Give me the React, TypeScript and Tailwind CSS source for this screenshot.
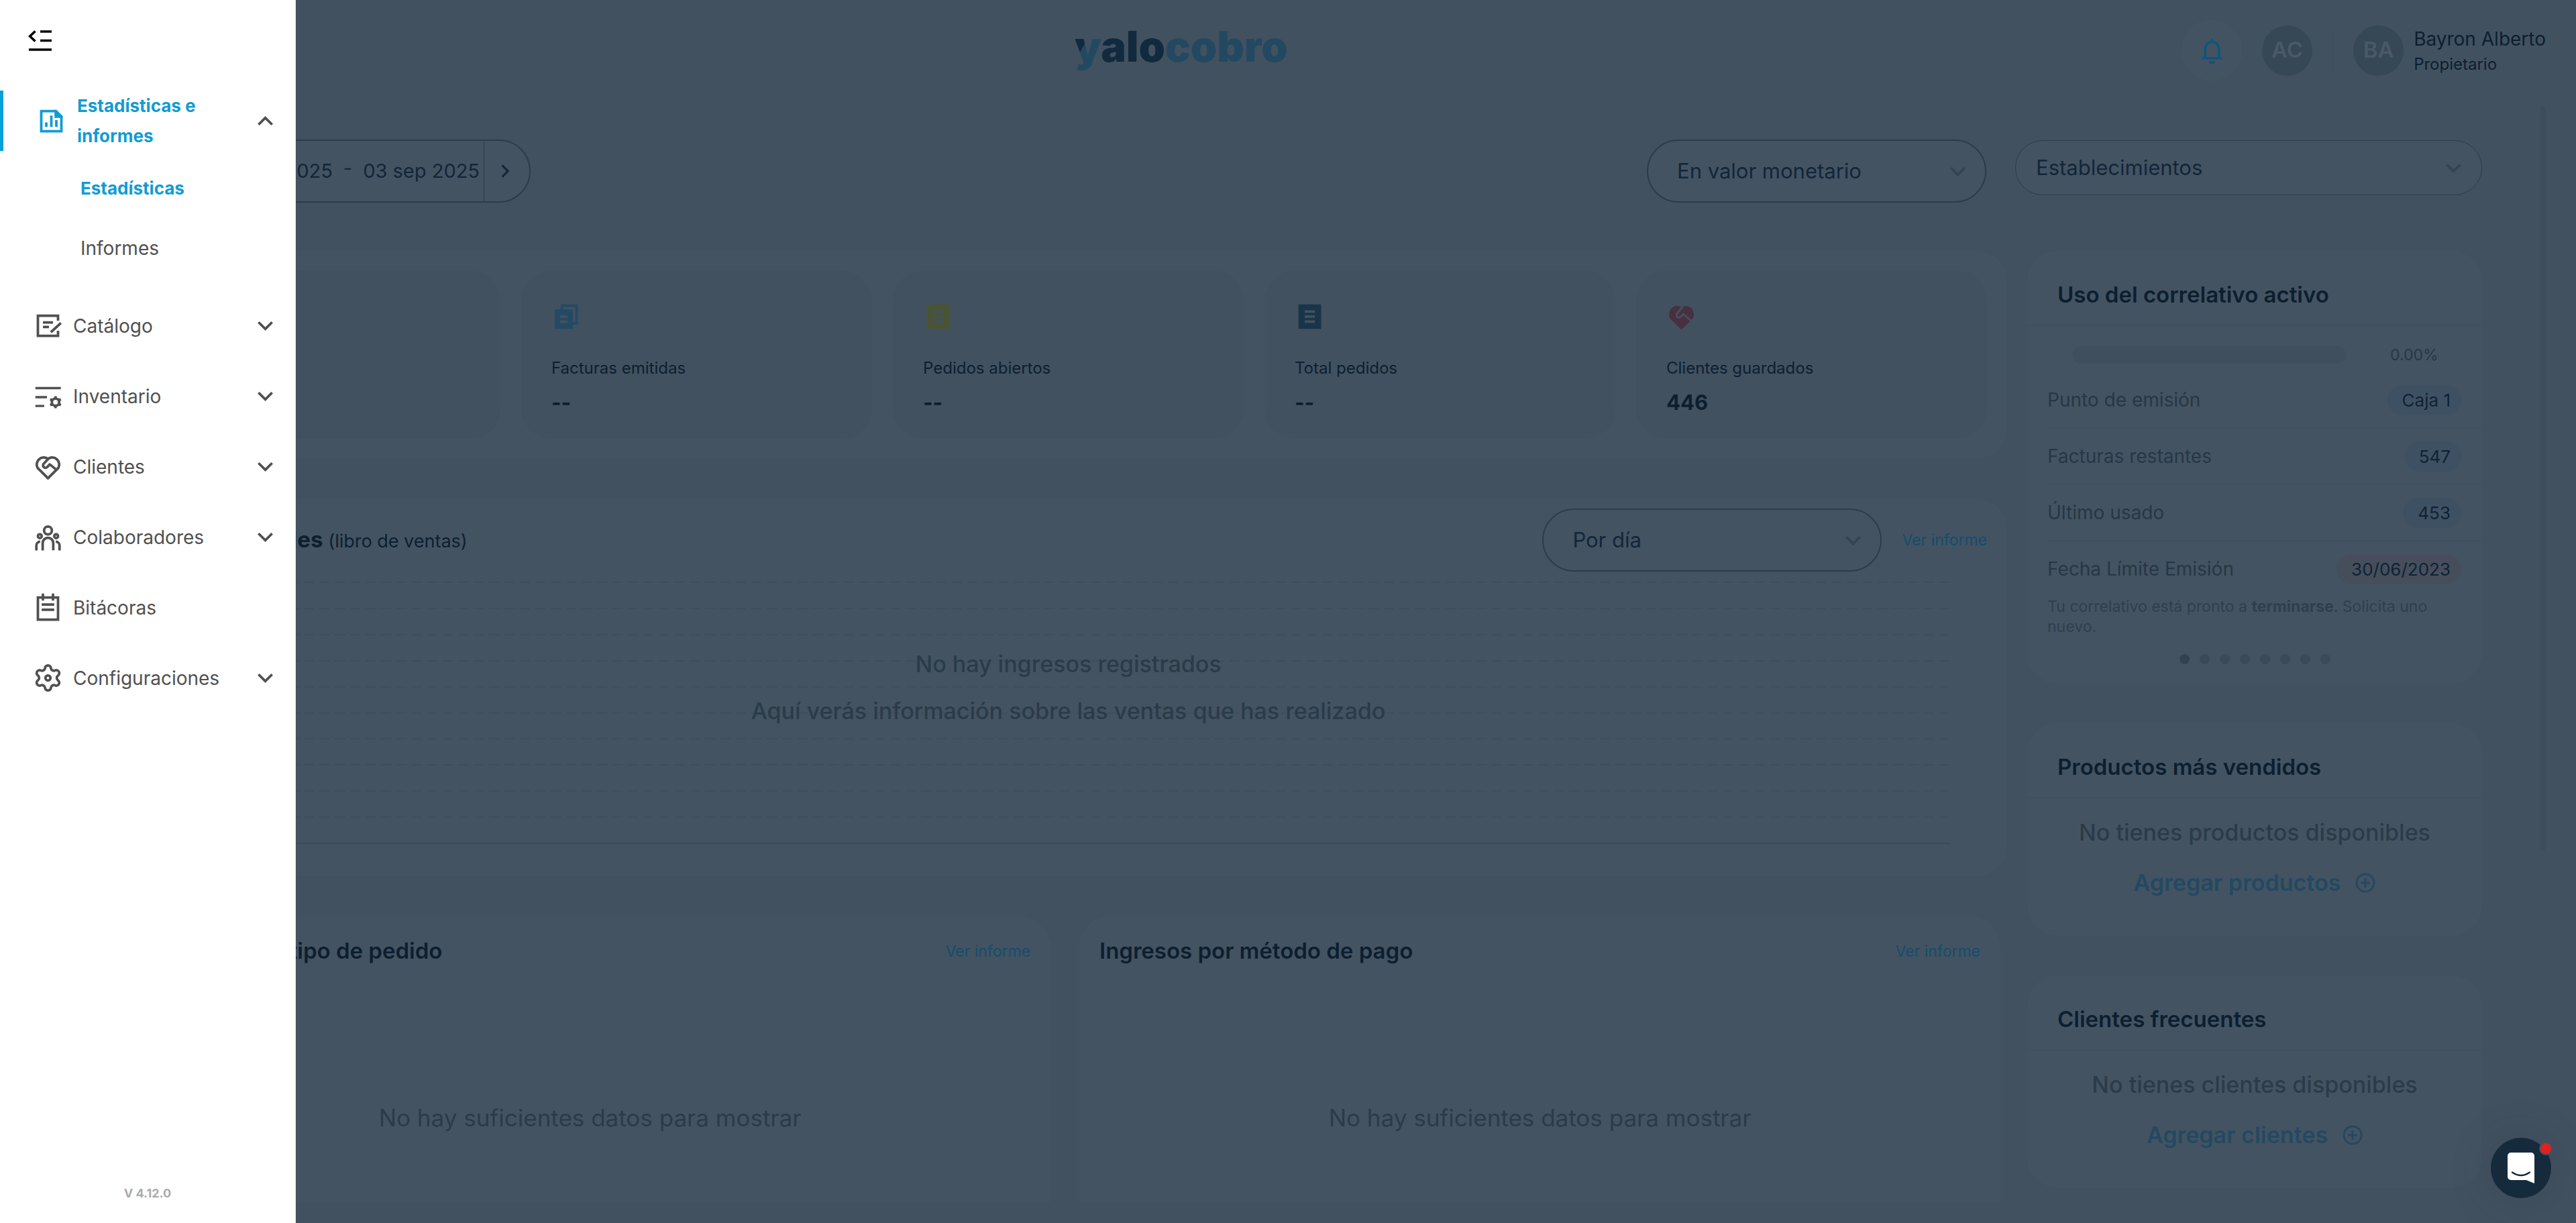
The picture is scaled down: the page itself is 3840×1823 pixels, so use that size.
import React from 'react'

type IconProps = { className?: string }

const Svg = ({ className = 'size-[45px]', children }: { className?: string, children: React.ReactNode }) => (
  <svg viewBox="0 0 24 24" className={className} fill="none" stroke="currentColor" strokeWidth="2" aria-hidden="true">
    {children}
  </svg>
)

const CollapseIcon = () => (
  <svg viewBox="0 0 36 32" className="h-8 w-9" fill="none" stroke="currentColor" strokeWidth="3.6" aria-hidden="true">
    <path d="M10.5 1.5L2.5 9l8 7.5M18 2h17M18 15.5h17M1 29h34" />
  </svg>
)

const ChevronIcon = ({ className = 'size-[45px]' }: IconProps) => (
  <Svg className={className}><path d="M6.6 9.2l5.4 5.4 5.4-5.4" /></Svg>
)

const ReportIcon = () => (
  <Svg>
    <path d="M4 4h11.6L20 8.400V20H4z" />
    <path d="M14.500 3h1.500l5 5v1.500h-6.500z" fill="currentColor" stroke="none" />
    <path d="M8 13v3.600M12 7.600v9M16 11.200v5.400" />
  </Svg>
)

const CatalogIcon = () => (
  <Svg><path d="M20 8V4H4v16h16v-4M8 9.400h8M8 13h4.800M14.300 17.200l8-7.400" /></Svg>
)

const InventoryIcon = () => (
  <Svg>
    <path d="M2 5.600h20.200M2 12.800h9.200M2 19.800h7" strokeWidth="1.800" />
    <circle cx="18" cy="16.800" r="2.900" />
    <path d="M18 12v1.600M18 20v1.600M13.800 14.400l1.400.8M20.800 18.400l1.400.8M13.800 19.200l1.400-.8M20.800 15.200l1.400-.8" />
  </Svg>
)

const heartPath = 'M12 21.300L3.700 13A5.600 5.600 0 0 1 12 5.900a5.600 5.600 0 0 1 8.300 7.100z'
const gripPath = 'M12.300 5.800L8.700 9.600a1.900 1.900 0 0 0 2.700 2.800l2-2.200 5.800 4.700'

const ClientsIcon = () => (
  <Svg><g strokeLinejoin="round"><path d={heartPath} /><path d={gripPath} /></g></Svg>
)

const TeamIcon = () => (
  <Svg>
    <circle cx="12" cy="6.800" r="3.100" />
    <circle cx="5.500" cy="11.300" r="1.500" />
    <circle cx="18.500" cy="11.300" r="1.500" />
    <path d="M7.800 22.600v-5.800a4.200 4.200 0 0 1 8.400 0v5.800M2.800 22.600v-4a3 3 0 0 1 3-2.900M21.200 22.600v-4a3 3 0 0 0-3-2.900" />
  </Svg>
)

const LogIcon = () => (
  <Svg><path d="M4 4h16v17.600H4zM8 .9v5.600M16 .9v5.600M7 9.700h10M7 13.800h10" /></Svg>
)

const GearIcon = () => (
  <Svg>
    <path d="M9.671 4.136a2.340 2.340 0 0 1 4.659 0 2.340 2.340 0 0 0 3.319 1.915 2.340 2.340 0 0 1 2.330 4.033 2.340 2.340 0 0 0 0 3.831 2.340 2.340 0 0 1-2.330 4.033 2.340 2.340 0 0 0-3.319 1.915 2.340 2.340 0 0 1-4.659 0 2.340 2.340 0 0 0-3.320-1.915 2.340 2.340 0 0 1-2.330-4.033 2.340 2.340 0 0 0 0-3.831A2.340 2.340 0 0 1 6.350 6.051a2.340 2.340 0 0 0 3.319-1.915" />
    <circle cx="12" cy="12" r="2" />
  </Svg>
)

const BellIcon = () => (
  <Svg>
    <path d="M4 18h16M6.500 18v-7.500a5.500 5.500 0 0 1 11 0V18M12 2.500v2" />
    <path d="M9.500 20.200h5a2.500 2.500 0 0 1-5 0z" fill="currentColor" stroke="none" />
  </Svg>
)

const InvoicesIcon = () => (
  <Svg>
    <path d="M2.800 6.500H17V22H2.800z" fill="currentColor" stroke="none" />
    <path d="M8.300 7V3.500H20V17.500h-3" />
    <path d="M6.800 12.300h6M6.800 16.300h6" stroke="#42515f" />
  </Svg>
)

const OrderIcon = () => (
  <Svg>
    <path d="M3 2.500h18v19.500H3z" fill="currentColor" stroke="none" />
    <path d="M8 8.200h8M8 12.200h8M8 16.200h8" stroke="#42515f" />
  </Svg>
)

const HeartFilledIcon = () => (
  <Svg>
    <path d={heartPath} fill="currentColor" stroke="currentColor" strokeLinejoin="round" />
    <path d="M13.500 3.600L8.700 9.600a1.900 1.900 0 0 0 2.700 2.800l2-2.200 6.800 5.800" stroke="#42515f" strokeWidth="1.500" />
  </Svg>
)

const PlusCircleIcon = () => (
  <svg viewBox="0 0 30 30" className="size-[30px]" fill="none" stroke="currentColor" strokeWidth="3" aria-hidden="true">
    <circle cx="15" cy="15" r="13" />
    <path d="M15 8v14M8 15h14" />
  </svg>
)

const menu = [
  { name: 'Catálogo', icon: <CatalogIcon />, open: true },
  { name: 'Inventario', icon: <InventoryIcon />, open: true },
  { name: 'Clientes', icon: <ClientsIcon />, open: true },
  { name: 'Colaboradores', icon: <TeamIcon />, open: true },
  { name: 'Bitácoras', icon: <LogIcon />, open: false },
  { name: 'Configuraciones', icon: <GearIcon />, open: true },
]

const stats = [
  { name: 'Facturas emitidas', value: '--', icon: <InvoicesIcon />, color: 'text-[#234a64]' },
  { name: 'Pedidos abiertos', value: '--', icon: <OrderIcon />, color: 'text-[#4a5435]' },
  { name: 'Total pedidos', value: '--', icon: <OrderIcon />, color: 'text-[#1a3449]' },
  { name: 'Clientes guardados', value: '446', icon: <HeartFilledIcon />, color: 'text-[#483040]' },
]

const usage = [
  { name: 'Punto de emisión', value: 'Caja 1', pill: 'bg-[#3e5163]' },
  { name: 'Facturas restantes', value: '547', pill: 'bg-[#3e5163]' },
  { name: 'Último usado', value: '453', pill: 'bg-[#3e5163]' },
  { name: 'Fecha Límite Emisión', value: '30/06/2023', pill: 'bg-[#464e5c]' },
]

const Sidebar = () => (
  <aside className="absolute inset-y-0 left-0 z-20 flex w-[441px] flex-col border-r border-[#dfe6ea] bg-white text-[28px] text-[#505050]">
    <button aria-label="Cerrar menú" className="mt-[45px] mb-[58px] ml-[42px] self-start text-black"><CollapseIcon /></button>
    <nav>
      <button className="flex h-[90px] w-full items-center gap-4 border-l-[5px] border-[#059fd9] pr-[22px] pl-[49px] text-left text-[26px] leading-[45px] font-bold text-[#129bd3]">
        <ReportIcon />
        <span className="flex-1">Estadísticas e<br />informes</span>
        <ChevronIcon className="size-[45px] rotate-180 text-[#505050]" />
      </button>
      <div className="mt-2.5 mb-[18px]">
        <a href="#" className="flex h-[90px] items-center pl-[120px] text-[26px] font-bold text-[#129bd3]">Estadísticas</a>
        <a href="#" className="flex h-[90px] items-center pl-[120px]">Informes</a>
      </div>
      {menu.map((item) =>
        <button key={item.name} className="flex h-[105px] w-full items-center gap-[15px] pr-[22px] pl-[49px] text-left">
          {item.icon}
          <span className="flex-1">{item.name}</span>
          {item.open && <ChevronIcon />}
        </button>
      )}
    </nav>
    <p className="mt-auto mb-[34px] text-center text-lg leading-5 font-bold text-[#ababab]">V 4.12.0</p>
  </aside>
)

const Header = () => (
  <header className="relative flex h-[150px] items-center justify-end pr-[45px]">
    <h1 className="absolute top-[33px] left-[1602px] text-[63px] leading-[72px] font-black text-[#234962]">
      <span className="bg-linear-[120deg,#112a3e_42%,#234962_42%] bg-clip-text text-transparent">y</span><span className="text-[#112a3e]">alo</span>cobro
    </h1>
    <button aria-label="Notificaciones" className="flex size-[90px] items-center justify-center rounded-full border border-[#465563] bg-[#445361] text-[#10557c]"><BellIcon /></button>
    <span className="ml-[30px] flex size-[75px] items-center justify-center rounded-full bg-[#364756] text-[33px] font-semibold text-[#4a5967]">AC</span>
    <span className="mx-[30px] h-[58px] w-px bg-[#3d4c5a]" />
    <span className="flex size-[75px] items-center justify-center rounded-full bg-[#364756] text-[33px] font-semibold text-[#4a5967]">BA</span>
    <div className="ml-[15px] pt-1 text-[#0c1f30]">
      <p className="text-[28px] leading-[38px]">Bayron Alberto</p>
      <p className="text-[24px] leading-[38px]">Propietario</p>
    </div>
  </header>
)

const Select = ({ label, value, box, field }: { label: string, value: string, box: string, field: string }) => (
  <div className={`relative ${box}`}>
    <select aria-label={label} className={`size-full appearance-none rounded-full border-[#2b3c4b] bg-[#445361] text-[31px] text-[#12263a] ${field}`}>
      <option>{value}</option>
    </select>
    <ChevronIcon className="pointer-events-none absolute inset-y-0 right-5 my-auto size-[45px] text-[#334452]" />
  </div>
)

const Chart = () => (
  <svg className="mt-[15px] h-[392px] w-full" aria-hidden="true">
    {[0, 39, 78, 117, 156, 195, 233, 272, 311, 350].map((y) =>
      <line key={y} x1="0" x2="100%" y1={y + 1} y2={y + 1} stroke="#3f4e5d" strokeWidth="2" strokeDasharray="15 8" />
    )}
    <line x1="0" x2="100%" y1="390" y2="390" stroke="#3b4a59" strokeWidth="2" />
  </svg>
)

const IncomeCard = ({ title }: { title: string }) => (
  <section className="h-[427px] flex-1 rounded-t-[45px] bg-[#445361] px-[30px] pt-8">
    <div className="flex h-10 items-center justify-between">
      <h2 className="text-[33px] font-semibold text-[#0c1f30]">{title}</h2>
      <a href="#" className="text-[23px] text-[#134d6e]">Ver informe</a>
    </div>
    <p className="mt-[204px] text-center text-[35px] leading-[48px] text-[#2b3b4a]">No hay suficientes datos para mostrar</p>
  </section>
)

const SideCard = ({ title, children }: { title: string, children: React.ReactNode }) => (
  <section className="rounded-[45px] bg-[#445361]">
    <h2 className="flex h-28 items-center border-b-2 border-[#414f5e] px-[45px] pt-[22px] text-[33px] font-semibold text-[#0c1f30]">
      {title}
    </h2>
    {children}
  </section>
)

const EmptyCard = ({ title, text, action }: { title: string, text: string, action: string }) => (
  <SideCard title={title}>
    <div className="flex h-[205px] flex-col items-center pt-[27px] text-[34px] leading-[48px] font-medium">
      <p className="text-[#2b3b4a]">{text}</p>
      <button className="mt-[27px] flex items-center gap-[22px] font-semibold text-[#234962]">{action}<PlusCircleIcon /></button>
    </div>
  </SideCard>
)

const Dashboard = () => (
  <main className="relative pt-[58px] pr-[140px] pb-[30px] pl-[193px]">
    <div className="mb-[72px] flex h-[94px] items-start">
      <div className="flex h-full w-[598px] rounded-full border-2 border-[#2b3c4b] bg-[#445361] text-[29px] text-[#12263a]">
        <p className="flex flex-1 items-center justify-end gap-4 pr-1.5"><span>03 sep 2025</span><span className="pb-2">-</span><span>03 sep 2025</span></p>
        <button aria-label="Siguiente" className="flex w-[68px] items-center justify-center border-l border-[#2b3c4b] pr-1.5"><ChevronIcon className="size-[38px] -rotate-90" /></button>
      </div>
      <Select label="Tipo de valor" value="En valor monetario" box="ml-auto h-[94px] w-[506px]" field="border-2 pl-[43px]" />
      <Select label="Establecimientos" value="Establecimientos" box="mt-px ml-[43px] h-[82px] w-[696px]" field="border pl-[30px]" />
    </div>

    <div className="flex items-start gap-[30px]">
      <div className="flex-1">
        <section className="grid grid-cols-5 gap-[31px] rounded-[45px] bg-[#445361] p-[30px]">
          <div className="rounded-[45px] bg-[#42515f]" />
          {stats.map((stat) =>
            <div key={stat.name} className="h-[250px] rounded-[45px] bg-[#42515f] p-[45px] text-[#0c1f30]">
              <div className={stat.color}>{stat.icon}</div>
              <p className="mt-[37px] text-[24px] leading-9">{stat.name}</p>
              <p className="mt-3 text-[31px] leading-[42px] font-bold">{stat.value}</p>
            </div>
          )}
        </section>

        <section className="mt-[60px] h-[562px] rounded-[45px] bg-[#445361] px-[30px] pt-[14px]">
          <div className="flex h-[94px] items-center">
            <h2 className="text-[33px] font-bold text-[#0c1f30]">Ingresos totales <span className="text-[27px] font-normal">(libro de ventas)</span></h2>
            <Select label="Periodo" value="Por día" box="ml-auto h-[94px] w-[506px]" field="border-2 pl-[43px]" />
            <a href="#" className="ml-[30px] text-[23px] text-[#134d6e]">Ver informe</a>
          </div>
          <div className="relative pr-[55px]">
            <Chart />
            <div className="absolute inset-x-0 top-[88px] text-center text-[34px] leading-[70px] font-medium text-[#2a3b4a]">
              <p>No hay ingresos registrados</p>
              <p>Aquí verás información sobre las ventas que has realizado</p>
            </div>
          </div>
        </section>

        <div className="mt-[60px] mr-2.5 flex gap-[43px]">
          <IncomeCard title="Ingresos por tipo de pedido" />
          <IncomeCard title="Ingresos por método de pago" />
        </div>
      </div>

      <div className="flex w-[678px] flex-col gap-[59px]">
        <SideCard title="Uso del correlativo activo">
          <div className="flex items-center pt-[30px] pl-[67px]">
            <div className="h-[26px] w-[408px] rounded-full bg-[#404f5d]" />
            <span className="ml-[66px] text-[23px] leading-[26px] text-[#263747]">0.00%</span>
          </div>
          <dl className="pt-[13px] pl-[30px] text-[28px]">
            {usage.map((row) =>
              <div key={row.name} className="flex h-[84px] items-center justify-between border-b-2 border-[#414f5e] pr-[31px] last:h-[82px] last:border-0">
                <dt className="text-[#263747]">{row.name}</dt>
                <dd className={`flex h-[45px] items-center rounded-full pr-4 pl-[22px] text-[26px] text-[#0f2234] ${row.pill}`}>{row.value}</dd>
              </div>
            )}
          </dl>
          <p className="pr-[45px] pl-[30px] text-[23px] leading-[30px] text-[#2f3f4e]">Tu correlativo está pronto a <b>terminarse</b>. Solicita uno nuevo.</p>
          <div className="flex justify-center gap-[15px] pt-[26px] pb-[29px]">
            {[0, 1, 2, 3, 4, 5, 6, 7].map((dot) =>
              <button key={dot} aria-label={`Correlativo ${dot + 1}`} className={`size-[15px] rounded-full ${dot === 0 ? 'bg-[#324251]' : 'bg-[#3b4a58]'}`} />
            )}
          </div>
        </SideCard>
        <EmptyCard title="Productos más vendidos" text="No tienes productos disponibles" action="Agregar productos" />
        <EmptyCard title="Clientes frecuentes" text="No tienes clientes disponibles" action="Agregar clientes" />
      </div>
    </div>
    <div className="absolute top-2 right-[45px] h-[1110px] w-2 rounded-full bg-[#3e4d5b]" />
  </main>
)

const ChatLauncher = () => (
  <button aria-label="Abrir chat" className="absolute right-[37px] bottom-[37px] z-10 flex size-[90px] items-center justify-center rounded-full bg-[#152b3c] shadow-[0_4px_60px_rgba(40,55,75,0.25)]">
    <svg viewBox="0 0 40 46" className="h-[46px] w-10" aria-hidden="true">
      <path d="M5 0h30a5 5 0 0 1 5 5v41l-12-5H5a5 5 0 0 1-5-5V5a5 5 0 0 1 5-5z" fill="#fff" />
      <path d="M7 29.500q13 9 26 0" fill="none" stroke="#152b3c" strokeWidth="2.500" strokeLinecap="round" />
    </svg>
    <span className="absolute top-[6px] -right-[2px] size-5 rounded-full border-2 border-[#425160] bg-[#e2211f]" />
  </button>
)

const App = () => {
  return (
    <div className="relative min-h-screen overflow-hidden bg-[#42515f] font-['Inter',sans-serif]">
      <Sidebar />
      <Header />
      <Dashboard />
      <ChatLauncher />
    </div>
  )
}

export default App
